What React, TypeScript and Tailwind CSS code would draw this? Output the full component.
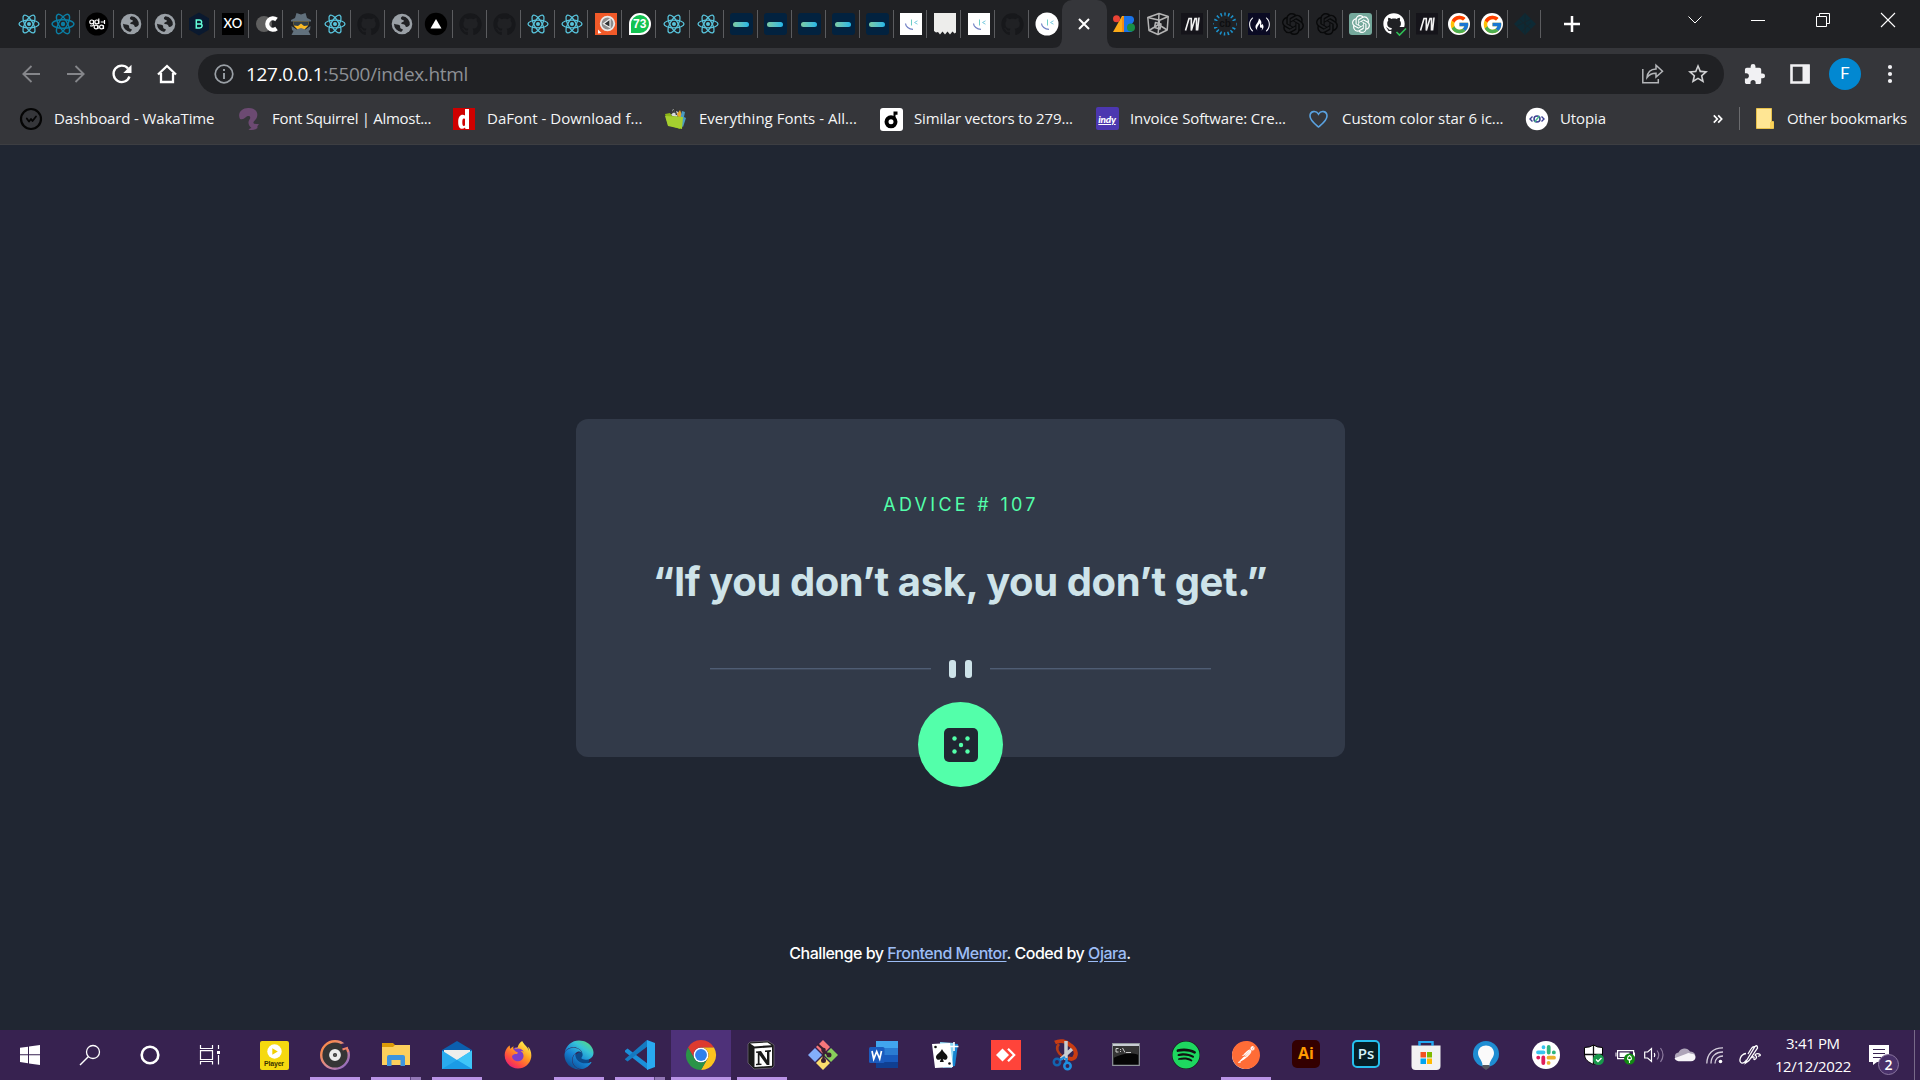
import React from "react";
import { FaGithub, FaSpotify, FaEdge, FaFirefoxBrowser, FaFreeCodeCamp } from "react-icons/fa";
import { SiOpenai, SiPostman } from "react-icons/si";
import { FcGoogle } from "react-icons/fc";
import { MdExtension, MdStarBorder } from "react-icons/md";

type SvgProps = { children: React.ReactNode; box?: string; className?: string };

const Svg = ({ children, box = "0 0 22 22", className = "size-[22px]" }: SvgProps) => (
  <svg viewBox={box} className={`${className} shrink-0 overflow-visible`} fill="none">
    {children}
  </svg>
);

/* ---------- tab favicons ---------- */

const Atom = ({ color, className }: { color: string; className: string }) => (
  <Svg className={className}>
    <g stroke={color} strokeWidth="1.300">
      <ellipse cx="11" cy="11" rx="10" ry="3.900" />
      <ellipse cx="11" cy="11" rx="10" ry="3.900" transform="rotate(60 11 11)" />
      <ellipse cx="11" cy="11" rx="10" ry="3.900" transform="rotate(120 11 11)" />
    </g>
    <circle cx="11" cy="11" r="2" fill={color} />
  </Svg>
);

const ReactTab = () => <Atom color="#58c4dc" className="size-[22px]" />;
const ReactDark = () => <Atom color="#0b7ea4" className="size-[24px]" />;
const GithubTab = () => <FaGithub className="size-[23px] text-[#17181b]" />;

const GlobeTab = () => (
  <Svg>
    <circle cx="11" cy="11" r="10.300" fill="#9aa0a6" />
    <path
      d="M11.500 3.200c-1.600 1-2 2.200-1.200 3 .9.9 2.400.3 2.600 1.600.2 1.500-2.400 1.200-2.600 2.500-.1 1.200 2.900.8 3.700 1.700.6.8.3 1.900 1.500 1.900 1.600 0 2.600-1 3.300-2.200A8 8 0 0 0 11.500 3.200Z"
      fill="#202124"
    />
    <path
      d="M3 10.800c1.800 1 4.300.4 5.600 1.500 1 .9.2 2.100.9 2.900.8.9 2.600.5 2.300 1.700-.2.900-1.400 1-1.500 2A8 8 0 0 1 3 10.800Z"
      fill="#202124"
    />
  </Svg>
);

const GdaTab = () => (
  <Svg>
    <circle cx="11" cy="11" r="11.500" fill="#000" />
    <g stroke="#fff" strokeWidth="1.200">
      <circle cx="5.700" cy="8.900" r="1.900" />
      <path d="M7.700 7v4.600c0 1.500-2.500 1.700-3.400.9" />
      <circle cx="10.800" cy="8.900" r="1.900" />
      <path d="M12.800 5.500v5.500M14.700 9h4M18.500 7v4" />
      <circle cx="10" cy="14" r="1.900" />
      <path d="M12 12.200v3.800M17.500 12.200v3.800" />
      <circle cx="15.500" cy="14" r="1.900" />
    </g>
  </Svg>
);

const BTab = () => (
  <Svg>
    <path d="M11-.5 21 5.200v11.600L11 22.500 1 16.800V5.200Z" fill="#0a192f" />
    <path d="M8.300 7v8h3.300c3.100 0 3.200-3.500 1-4 1.700-.7 1.400-4-1.200-4ZM8.500 10.900h3.500" stroke="#64ffda" strokeWidth="1.500" />
  </Svg>
);

const XOTab = () => (
  <div className="flex size-[22px] items-center justify-center bg-black font-['Lato'] text-[13px] font-semibold text-white">XO</div>
);

const CTab = () => (
  <Svg>
    <circle cx="8" cy="11" r="8" fill="#5f5f5f" />
    <path d="M20.500 6.500a5.700 5.700 0 1 0 0 9" stroke="#fff" strokeWidth="4.200" />
  </Svg>
);

const SpyTab = () => (
  <Svg>
    <path d="M5 5 6.500 0 11 1.500 15.500 0 17 5l4 2v1.500H1V7Z" fill="#61707c" />
    <path d="M3 8.500h16l-1 4.500-4 4H8l-4-4Z" fill="#f9b924" />
    <path d="M3 8.500h16l-1 4-4 .5-3-2.500-3 2.500-4-.5Z" fill="#33404a" />
    <path d="m1.500 13 5 3.500L11 15l4.500 1.500 5-3.500-.5 4-1.500 1 2 4h-19l2-4-1.500-1Z" fill="#61707c" />
  </Svg>
);

const VercelTab = () => (
  <Svg>
    <circle cx="11" cy="11" r="11.200" fill="#000" />
    <path d="M11 6 16.500 15.500h-11Z" fill="#fff" />
  </Svg>
);

const OrangeTab = () => (
  <Svg>
    <path d="M0 0h22v22H0Z" fill="#f15a29" />
    <circle cx="12.500" cy="10.500" r="6.800" fill="#8d8d8d" stroke="#e9e9e9" strokeWidth="1.800" />
    <path d="M8.500 10.700 15 6v8.500Z" fill="#2e3133" stroke="#eee" strokeWidth="1.200" />
    <path d="M3 20.500v-4L6.500 20Z" fill="#fff" />
  </Svg>
);

const WhatsappTab = () => (
  <div className="flex size-[22px] items-center justify-center rounded-full rounded-bl-[3px] border-2 border-white bg-[#12c351] font-['Liberation_Sans'] text-[12px] font-bold text-white">
    73
  </div>
);

const PillTab = () => (
  <div className="flex h-[22px] w-[23px] items-center justify-center rounded-[3px] bg-[#02223f]">
    <div className="h-[5px] w-4 rounded-full bg-linear-to-r from-[#7ccba2] to-[#1fb6e8]" />
  </div>
);

const Smile = () => (
  <>
    <path d="M11.500 6.500v6" stroke="#5cc8c0" strokeWidth=".9" />
    <path d="m17.500 7.800-3 1.700 3 1.700" stroke="#6fc7dd" strokeWidth=".9" />
    <path d="M5.500 10.500c.2 3 3.300 5.800 7.500 5.800" stroke="#6f7fc4" strokeWidth="1.200" />
  </>
);

const SmileSquareTab = () => (
  <Svg>
    <path d="M0 0h22v22H0Z" fill="#fff" />
    <Smile />
  </Svg>
);

const SmileRoundTab = () => (
  <Svg>
    <circle cx="11" cy="11" r="11.500" fill="#fff" />
    <Smile />
  </Svg>
);

const PaperTab = () => (
  <Svg>
    <path d="M0 0h22v19.500l-1.500 1-2-2-2.500 3-2.500-3-2.500 3-2.500-3-2.500 3-2-2.500-2 .5L0 18Z" fill="#ededeb" />
  </Svg>
);

const ABTab = () => (
  <Svg>
    <path d="M9 3h3v16H0Z" fill="#fbab18" />
    <path d="M11 3h6.500c4.500 0 4.500 6 1.500 7.500 3.500 2 2.500 8.500-2 8.500h-6Z" fill="#1a73e8" />
    <path d="M11 3v16H9V5Z" fill="#f28a16" />
    <circle cx="3.500" cy="5.700" r="3.500" fill="#ea4335" />
    <circle cx="18" cy="14.500" r="4" fill="#188f45" />
  </Svg>
);

const CubeTab = () => (
  <Svg>
    <g stroke="#b4b4b4" strokeWidth="1.500" strokeLinejoin="round">
      <path d="M.8 4.500 12 .5l9.200 3-1 13.500L11 21.500 2 17.500Z" />
      <path d="M.8 4.500 12.500 7.300l8.700-3.800M12.500 7.300 11 21.500M12 .5l-.5 11M2 17.500l9.500-6 8.700 5.500M8.500 9.500l-1 5 5.500 1.500 1-5Z" />
    </g>
  </Svg>
);

const MTab = () => (
  <Svg>
    <path d="M0 0h22v21.500H0Z" fill="#15141a" />
    <path d="M4.500 17.500 8 5.500l2.300 0V17.500L14 5.500h1.500V17.500M18 4.500l-1.500 13" stroke="#f2f2f2" strokeWidth="1.600" />
  </Svg>
);

const CbTab = () => (
  <Svg>
    <circle cx="11" cy="11" r="9.900" stroke="#1b93ce" strokeWidth="3.400" strokeDasharray="1.500 2.300" />
    <path d="M0 8h22v6H0Z" fill="#202124" />
    <text x="11" y="14" textAnchor="middle" fontSize="10" fontWeight="bold" fontFamily="Liberation Sans, sans-serif" fill="#0d0e10">
      cb
    </text>
  </Svg>
);

const FccTab = () => (
  <div className="flex size-[22px] items-center justify-center bg-[#0a0a23]">
    <FaFreeCodeCamp className="size-[21px] text-white" />
  </div>
);

const OpenaiTab = () => <SiOpenai className="size-[22px] text-[#08090a]" />;

const ChatgptTab = () => (
  <div className="flex h-[22px] w-[23px] items-center justify-center rounded-[3px] bg-[#75a99c]">
    <SiOpenai className="size-[18px] text-white" />
  </div>
);

const GithubCheckTab = () => (
  <div className="relative size-[22px]">
    <FaGithub className="size-[22px] text-white" />
    <svg viewBox="0 0 12 10" className="absolute -right-0.5 -bottom-0.5 h-[10px] w-3" fill="none">
      <path d="M0 0h12v10H0Z" fill="#202124" />
      <path d="m1.500 5 3 3L11 1.500" stroke="#2fbf55" strokeWidth="1.600" />
    </svg>
  </div>
);

const GoogleTab = () => (
  <div className="flex size-[22px] items-center justify-center rounded-full bg-white">
    <FcGoogle className="size-[21px]" />
  </div>
);

const DiamondTab = () => (
  <Svg>
    <path d="M11 0 22 11 11 22 0 11Z" fill="#0d2a35" />
    <path d="m5 6 12 10M3 13l14-7M11 1v20M8 18l9-8" stroke="#1b2429" strokeWidth=".8" />
  </Svg>
);

const leftTabs = [
  ReactTab, ReactDark, GdaTab, GlobeTab, GlobeTab, BTab, XOTab, CTab, SpyTab, ReactTab, GithubTab, GlobeTab,
  VercelTab, GithubTab, GithubTab, ReactTab, ReactTab, OrangeTab, WhatsappTab, ReactTab, ReactTab, PillTab,
  PillTab, PillTab, PillTab, PillTab, SmileSquareTab, PaperTab, SmileSquareTab, GithubTab, SmileRoundTab,
];
const rightTabs = [ABTab, CubeTab, MTab, CbTab, FccTab, OpenaiTab, OpenaiTab, ChatgptTab];
const endTabs = [GithubCheckTab, MTab, GoogleTab, GoogleTab, DiamondTab];

const Tabs = ({ items, width, openEnd = false }: { items: React.FC[]; width: string; openEnd?: boolean }) => (
  <>
    {items.map((Icon, i) => (
      <div
        key={i}
        className={`${width} flex h-7 shrink-0 items-center justify-center border-r pl-0.5 ${
          openEnd && i === items.length - 1 ? "border-transparent" : "border-[#5b5c5f]"
        }`}
      >
        <Icon />
      </div>
    ))}
  </>
);

const TabStrip = () => (
  <div className="flex h-12 items-center bg-[#202124] pl-3">
    <Tabs items={leftTabs} width="w-[33.920px]" openEnd />
    <div className="relative -ml-[1.500px] flex h-12 w-[45px] shrink-0 items-center justify-center self-start rounded-t-[10px] bg-[#35363a]">
      <Svg box="0 0 12 12" className="size-3">
        <path d="m1 1 10 10M11 1 1 11" stroke="#fff" strokeWidth="2" />
      </Svg>
      <svg viewBox="0 0 10 10" className="absolute bottom-0 -left-2.5 size-2.5">
        <path d="M10 0v10H0Q10 10 10 0Z" fill="#35363a" />
      </svg>
      <svg viewBox="0 0 10 10" className="absolute -right-2.5 bottom-0 size-2.5">
        <path d="M0 0v10h10Q0 10 0 0Z" fill="#35363a" />
      </svg>
    </div>
    <div className="flex items-center">
      <Tabs items={rightTabs} width="w-[33.800px]" />
      <Tabs items={endTabs} width="w-[32.800px]" />
    </div>
    <div className="ml-[22px]">
      <Svg box="0 0 18 18" className="size-[18px]">
        <path d="M9 1v16M1 9h16" stroke="#fff" strokeWidth="2.500" />
      </Svg>
    </div>
    <div className="mr-[25px] mb-2 ml-auto flex items-center">
      <Svg box="0 0 14 8" className="mr-[49px] h-2 w-3.5">
        <path d="m.5.5 6.500 6.500L13.500.5" stroke="#fff" strokeWidth="1" />
      </Svg>
      <div className="mr-[51px] h-px w-3.5 bg-white" />
      <Svg box="0 0 14 14" className="mr-[51px] size-3.5">
        <path d="M.5 3.500h10v10H.5ZM3.500 3.500v-3h10v10h-3" stroke="#fff" />
      </Svg>
      <Svg box="0 0 14 14" className="size-3.5">
        <path d="m0 0 14 14M14 0 0 14" stroke="#fff" strokeWidth="1.100" />
      </Svg>
    </div>
  </div>
);

const Toolbar = () => (
  <div className="flex h-[46px] items-end pl-[22px]">
    <div className="flex h-10 w-[176px] items-center">
      <Svg box="0 0 18 18" className="mr-[27px] size-[18px]">
        <path d="M18 9H1M9.500 1 1.300 9l8.200 8" stroke="#85868a" strokeWidth="1.800" />
      </Svg>
      <Svg box="0 0 18 18" className="mr-[27px] size-[18px]">
        <path d="M0 9h17M8.500 1l8.200 8-8.200 8" stroke="#85868a" strokeWidth="1.800" />
      </Svg>
      <Svg box="0 0 20 20" className="mr-[25px] size-5">
        <path d="M17.500 12.500A8.200 8.200 0 1 1 16 4.500" stroke="#fff" strokeWidth="2.300" />
        <path d="M19.500.8v8.200h-8.200Z" fill="#fff" />
      </Svg>
      <Svg box="0 0 20 20" className="size-5">
        <path d="M1 10.500 10 2l9 8.500M4 9v9h12V9" stroke="#fff" strokeWidth="2.300" />
      </Svg>
    </div>
    <div className="flex h-10 w-[1526px] items-center rounded-full bg-[#202124] pr-3.5 pl-4">
      <Svg box="0 0 20 20" className="size-5">
        <circle cx="10" cy="10" r="8.800" stroke="#9aa0a6" strokeWidth="1.700" />
        <path d="M10 9v6M10 5v2" stroke="#9aa0a6" strokeWidth="1.900" />
      </Svg>
      <div className="ml-3 font-['Open_Sans','Noto_Sans',sans-serif] text-[19px] leading-none tracking-[-0.320px] whitespace-nowrap text-[#8d9095]">
        <span className="text-white">127.0.0.1</span>:5500/index.html
      </div>
      <Svg box="0 0 22 20" className="mr-[22px] ml-auto h-5 w-[22px]">
        <path d="M.8 5v13.800h15.500V15" stroke="#b4b6b9" strokeWidth="1.500" />
        <path d="M5 13.500C5.500 8 9 5.200 14 5V1.300l6.500 5.900L14 13V9.300c-4-.1-6.500 1-9 4.200Z" stroke="#b4b6b9" strokeWidth="1.500" />
      </Svg>
      <MdStarBorder className="size-6 text-[#d0d1d3]" />
    </div>
    <div className="flex h-10 items-center">
      <MdExtension className="ml-[19px] size-[23px] text-[#f1f1f3]" />
      <Svg box="0 0 20 20" className="ml-6 size-5">
        <path d="M1.500 1.500h17v17h-17Z" stroke="#f1f1f3" strokeWidth="2.600" />
        <path d="M12.500 1h7v18h-7Z" fill="#f1f1f3" />
      </Svg>
      <div className="ml-[19px] flex size-8 items-center justify-center rounded-full bg-[#0288d1] pb-px font-['Roboto'] text-[17px] text-white">F</div>
      <Svg box="0 0 4 20" className="ml-[27px] h-5 w-1">
        <circle cx="2" cy="3" r="2.100" fill="#f1f1f3" />
        <circle cx="2" cy="10" r="2.100" fill="#f1f1f3" />
        <circle cx="2" cy="17" r="2.100" fill="#f1f1f3" />
      </Svg>
    </div>
  </div>
);

/* ---------- bookmarks ---------- */

const Waka = () => (
  <Svg>
    <circle cx="11" cy="11" r="10" stroke="#050505" strokeWidth="2.200" />
    <path d="m6.800 10.500 2.200 3 2-2.500 1.500 2 3.500-4.500" stroke="#050505" strokeWidth="1.800" strokeLinejoin="round" strokeLinecap="round" />
  </Svg>
);
const Squirrel = () => (
  <Svg>
    <path
      d="M2 11C-1 5 4-.5 11 0c6 .2 9.500 4 8 9-1 3.300-4 4-3.500 6 .4 1.300 3 1 5.500 1.300-1 1.500-2 1.500-1.500 3.700-2 2.200-7 2.500-9 1.500 1-1 2-1.200 3-1.500-3-2.500-4-6-2-8.500 1.500-2 .5-4-1.500-3.500C7 8.700 7 12 2 11Z"
      fill="#6c4a72"
    />
  </Svg>
);
const Dafont = () => (
  <Svg>
    <path d="M0 0h22v22H0Z" fill="#cf0000" />
    <path d="M12 1h4v20h-3.500l-.5-1.500C9 22.500 5 20.500 5.200 14 5.200 8 8.500 5.500 12 7.500Zm0 10c-2-1.300-2.700.5-2.700 3.300 0 3 .7 4.500 2.700 3.200Z" fill="#fff" />
  </Svg>
);
const Folder = () => (
  <Svg>
    <path d="m6 7 2-6 5 3-1 7Z" fill="#d8dcdc" />
    <path d="m6 6 4-5 1.500 6M8 4h3" stroke="#343434" strokeWidth="1.300" />
    <path d="m12 6 3-4 2 5-2 6Z" fill="#e4a328" />
    <path d="m17 3 3 1-1 5 2 1-3 9-4-3Z" fill="#4a9bc1" />
    <path d="m0 6 5-1 2 3 9 1-1 12L3 17Z" fill="#8bb517" />
    <path d="m0 8 18 1-1 12L3 18Z" fill="#a5cf2f" />
  </Svg>
);
const Similar = () => (
  <Svg>
    <rect width="23" height="23" rx="3" fill="#fff" />
    <circle cx="11" cy="13.800" r="4.500" stroke="#000" strokeWidth="4" />
    <path d="M13.500 3.500h4v3.200h-2V12h-2Z" fill="#000" />
  </Svg>
);
const Indy = () => (
  <div className="flex size-[23px] shrink-0 items-center justify-center rounded-[2px] bg-[#4c37b0] font-['Lato'] text-[10px] font-black tracking-tight text-white italic underline">
    indy
  </div>
);
const Heart = () => (
  <Svg>
    <path d="M10.500 19C7 16 2 12.500 2 8c0-5 6-6 8.500-1.800C13 2 19 3 19 8c0 4.500-5 8-8.500 11Z" stroke="#5aa2e0" strokeWidth="1.600" />
  </Svg>
);
const Utopia = () => (
  <Svg>
    <circle cx="11" cy="11" r="11.200" fill="#fff" />
    <circle cx="11" cy="11" r="3" stroke="#3b3f91" strokeWidth="1.500" />
    <path d="M6.500 8.500 4 11l2.500 2.500M15.500 8.500 18 11l-2.500 2.500" stroke="#3b3f91" strokeWidth="1.400" />
    <path d="m8.500 14 5-6" stroke="#43bb8a" strokeWidth="1.300" />
  </Svg>
);

const bookmarks: { icon: React.FC; label: string; slot: string }[] = [
  { icon: Waka, label: "Dashboard - WakaTime", slot: "w-[218px] tracking-[-0.120px]" },
  { icon: Squirrel, label: "Font Squirrel | Almost...", slot: "w-[215px] tracking-[-0.300px]" },
  { icon: Dafont, label: "DaFont - Download f...", slot: "w-[212px] tracking-[0.020px]" },
  { icon: Folder, label: "Everything Fonts - All...", slot: "w-[215px] tracking-[0.020px]" },
  { icon: Similar, label: "Similar vectors to 279...", slot: "w-[216px] tracking-[-0.140px]" },
  { icon: Indy, label: "Invoice Software: Cre...", slot: "w-[212px] tracking-[-0.130px]" },
  { icon: Heart, label: "Custom color star 6 ic...", slot: "w-[218px] tracking-[-0.070px]" },
  { icon: Utopia, label: "Utopia", slot: "w-[184px] tracking-[-0.100px]" },
];

const Bookmarks = () => (
  <div className="flex h-[51px] items-center border-b border-[#3d3e42] pb-px pl-5 font-['Open_Sans','Noto_Sans',sans-serif] text-[15px] leading-none tracking-[-0.220px] whitespace-nowrap text-[#f4f5f6]">
    {bookmarks.map(({ icon: Icon, label, slot }) => (
      <div key={label} className={`${slot} flex shrink-0 items-center`}>
        <div className="mr-3 flex size-[22px] shrink-0 items-center justify-center">
          <Icon />
        </div>
        <span className="pb-px">{label}</span>
      </div>
    ))}
    <Svg box="0 0 10 8" className="ml-[3px] h-2 w-2.5">
      <path d="m.8.3 3.500 3.700L.8 7.700M5.200.3 8.700 4 5.200 7.700" stroke="#fff" strokeWidth="1.700" />
    </Svg>
    <div className="ml-4 h-[23px] w-px bg-[#6a6b6e]" />
    <Svg box="0 0 18 21" className="mr-[13px] ml-4 h-[21px] w-[18px]">
      <path d="M.5.500h15v13h2v7H.5Z" fill="#ffe694" stroke="#e8c14b" />
      <path d="M14 20v-6h3.500v6Z" fill="#fbd35a" />
    </Svg>
    <span className="pb-px">Other bookmarks</span>
  </div>
);

/* ---------- page ---------- */

const Page = () => (
  <main className="flex h-[885px] flex-col items-center bg-[#202632] pt-[274px] font-['Inter',sans-serif]">
    <section className="flex h-[338px] w-[769px] flex-col items-center rounded-xl bg-[#323a49] pt-[76px]">
      <h1 className="pl-0.5 text-[18px] leading-[20px] font-normal tracking-[3.300px] whitespace-nowrap text-[#53ffaa]">ADVICE # 107</h1>
      <p className="mt-[42px] text-[40px] leading-[50px] font-bold tracking-[-0.420px] whitespace-nowrap text-[#cee3e9]">
        “If you don’t ask, you don’t get.”
      </p>
      <div className="mt-[53px] flex h-[18px] items-center">
        <div className="flex h-0.5 w-[221px] flex-col bg-[#3e485a]">
          <div className="h-px bg-[#4f5d74]" />
        </div>
        <div className="mx-[18px] flex gap-[9px]">
          <div className="h-[18px] w-[7px] rounded-[3px] bg-[#cee3e9]" />
          <div className="h-[18px] w-[7px] rounded-[3px] bg-[#cee3e9]" />
        </div>
        <div className="flex h-0.5 w-[221px] flex-col bg-[#3e485a]">
          <div className="h-px bg-[#4f5d74]" />
        </div>
      </div>
      <button className="mt-6 flex size-[85px] shrink-0 items-center justify-center rounded-full bg-[#53ffaa]">
        <Svg box="0 0 34 34" className="ml-px size-[34px]">
          <rect width="34" height="34" rx="5" fill="#202632" />
          <g fill="#53ffaa">
            <circle cx="10.500" cy="10.500" r="2.200" />
            <circle cx="23.500" cy="10.500" r="2.200" />
            <circle cx="17" cy="17" r="2.200" />
            <circle cx="10.500" cy="23.500" r="2.200" />
            <circle cx="23.500" cy="23.500" r="2.200" />
          </g>
        </Svg>
      </button>
    </section>
    <footer className="mt-[186px] text-[16px] leading-5 font-medium tracking-[-0.480px] whitespace-nowrap text-white">
      Challenge by <a className="text-[#9dbdf5] underline underline-offset-2">Frontend Mentor</a>. Coded by{" "}
      <a className="text-[#9dbdf5] underline underline-offset-2">Ojara</a>.
    </footer>
  </main>
);

/* ---------- taskbar ---------- */

const I30 = ({ children }: { children: React.ReactNode }) => (
  <Svg box="0 0 30 30" className="size-[30px]">
    {children}
  </Svg>
);

const WindowsIcon = () => (
  <Svg box="0 0 20 20" className="size-5">
    <path d="M0 2.800 8 1.700v7.600H0ZM9 1.500 20 0v9.300H9ZM0 10.300h8v7.900L0 17.100ZM9 10.300h11V20L9 18.500Z" fill="#fff" />
  </Svg>
);
const SearchIcon = () => (
  <Svg box="0 0 20 20" className="size-5">
    <circle cx="13" cy="7" r="6.500" stroke="#fff" strokeWidth="1.300" />
    <path d="M8.500 11.500 0 20" stroke="#fff" strokeWidth="1.500" />
  </Svg>
);
const CortanaIcon = () => (
  <Svg box="0 0 20 20" className="size-5">
    <circle cx="10" cy="10" r="8.300" stroke="#fff" strokeWidth="2.600" />
  </Svg>
);
const TaskViewIcon = () => (
  <Svg box="0 0 20 20" className="size-5">
    <path d="M.5 0v3.500h12V0M.5 5.700h12v8.800H.5ZM.5 19.500V16.500h12v3M18.500 0v4M18.500 10v9.500" stroke="#fff" strokeWidth="1.200" />
    <path d="M17 6h3v3h-3Z" fill="#fff" />
  </Svg>
);

const PlayerIcon = () => (
  <div className="flex size-[29px] flex-col items-center rounded-[2px] bg-[#f5d90f] pt-[3px]">
    <Svg box="0 0 15 15" className="size-[15px]">
      <circle cx="7.500" cy="7.500" r="7.200" fill="#fff" />
      <path d="m5.300 4.300 5.500 3.200-5.500 3.200Z" fill="#f0cf00" />
    </Svg>
    <span className="font-['Liberation_Sans'] text-[7px] leading-[9px] font-bold tracking-[-0.200px] text-[#3c3300]">Player</span>
  </div>
);
const GrooveIcon = () => (
  <I30>
    <defs>
      <linearGradient id="groove" x1="0" y1="0" x2="1" y2="1">
        <stop offset=".2" stopColor="#f78a52" />
        <stop offset=".55" stopColor="#d88a94" />
        <stop offset="1" stopColor="#7d62c9" />
      </linearGradient>
    </defs>
    <circle cx="15" cy="15" r="13.800" fill="#353535" stroke="url(#groove)" strokeWidth="2.400" />
    <path d="m21 4 4-1 5 6-7 1" fill="#372250" />
    <path d="m22.500 9.500 4.500-1.500 1 4" stroke="#f28369" strokeWidth="2" />
    <circle cx="15" cy="15" r="4" stroke="#ececec" strokeWidth="3.800" />
    <circle cx="15" cy="15" r="1.500" fill="#555" />
  </I30>
);
const ExplorerIcon = () => (
  <I30>
    <path d="M1 3h11l2 2v6H1Z" fill="#dc9a07" />
    <path d="M1 7h11l2-2h15v20H1Z" fill="#fccf5c" />
    <path d="M6 26V17q0-2 2-2h14q2 0 2 2v9h-4.500v-6h-9v6Z" fill="#3d94de" />
  </I30>
);
const MailIcon = () => (
  <I30>
    <path d="M0 10 15 1l15 9v10H0Z" fill="#0b5fae" />
    <path d="M2 10h26v10H2Z" fill="#eeeeec" />
    <path d="M0 10.500 15 20l15-9.500V29H0Z" fill="#29aaee" />
    <path d="m15 20 15-9.500V29Z" fill="#3fc6f8" />
    <path d="M0 29 15 20l15 9Z" fill="#1a9be6" />
  </I30>
);
const FirefoxIcon = () => (
  <div className="relative size-7">
    <div className="absolute inset-1.5 rounded-full bg-[#7b3fc9]" />
    <svg className="absolute size-0">
      <linearGradient id="fox" x1=".9" y1="0" x2=".2" y2="1">
        <stop offset=".1" stopColor="#fff04a" />
        <stop offset=".45" stopColor="#ff9a22" />
        <stop offset=".75" stopColor="#ff4b41" />
        <stop offset="1" stopColor="#e6187d" />
      </linearGradient>
    </svg>
    <FaFirefoxBrowser className="relative size-7" fill="url(#fox)" />
  </div>
);
const EdgeIcon = () => (
  <div className="relative size-[30px]">
    <svg className="absolute size-0">
      <linearGradient id="edge" x1="1" y1="0" x2=".3" y2="1">
        <stop offset="0" stopColor="#5fe065" />
        <stop offset=".35" stopColor="#36c2d7" />
        <stop offset=".65" stopColor="#1784d6" />
        <stop offset="1" stopColor="#0c4f94" />
      </linearGradient>
    </svg>
    <div className="absolute top-3 left-2.5 h-4 w-[15px] rounded-full bg-[#0c4a8a]" />
    <FaEdge className="relative size-[30px]" fill="url(#edge)" />
  </div>
);
const CodeIcon = () => (
  <I30>
    <path d="M0 10.500 2.500 8.500 23 24v6L0 12Z" fill="#1b8fd8" />
    <path d="M0 19 22 0l1 6L2.500 21.500 0 19.500Z" fill="#1579c0" />
    <path d="M22 0 30 3v24l-8 3Z" fill="#29a9f1" />
  </I30>
);
const ChromeIcon = () => (
  <Svg box="0 0 48 48" className="size-[30px]">
    <circle cx="24" cy="24" r="12" fill="#fff" />
    <path d="M24 12H44.780a23.994 23.994 0 0 0-41.564.003L13.608 30l.009-.002A11.985 11.985 0 0 1 24 12Z" fill="#dd3b2f" />
    <path d="M34.391 30.003 24 48A23.994 23.994 0 0 0 44.780 12.003H24l-.003.009A11.985 11.985 0 0 1 34.391 30.003Z" fill="#fcc31e" />
    <path d="M13.609 30.003 3.218 12.006A23.994 23.994 0 0 0 24.003 48L34.393 30.003l-.007-.007a11.985 11.985 0 0 1-20.778.007Z" fill="#2a9447" />
    <circle cx="24" cy="24" r="9.500" fill="#2f80ec" />
  </Svg>
);
const NotionIcon = () => (
  <Svg box="2 0 30 30" className="size-[30px]">
    <path d="M3 4 5 2l18-1 6 4v21l-2 2-18 1-6-6Z" fill="#191919" stroke="#77717d" strokeWidth=".7" />
    <path d="m5 3.500 17.500-1 4 2.700-17 1.200Z" fill="#fff" />
    <path d="m9.500 8.500 17.500-1.200v18.500L9.500 27Z" fill="#fff" />
    <path d="m11 11.500 5-.4 6 9v-8l-2-.2v-1.400l6-.4v1.500l-1.600.3v13l-2.600.1-7.300-10v8.500l2 .3v1.200l-5.500.3v-1.300l1.800-.5V13l-1.800-.2Z" fill="#191919" />
  </Svg>
);
const GitIcon = () => (
  <I30>
    <path d="m15 0 7 7-7 7-7-7Z" fill="#f7767b" />
    <path d="m7 8 7 7-7 7-7-7Z" fill="#83aefb" />
    <path d="m23 8 7 7-7 7-7-7Z" fill="#88ce5b" />
    <path d="m15 16 7 7-7 7-7-7Z" fill="#fbdc6d" />
    <path d="m9.500 4 6 5.500v12M15.500 11l6 4.500" stroke="#3a2032" strokeWidth="2.200" />
    <circle cx="15.500" cy="20.500" r="2.500" fill="#3a2032" />
    <circle cx="15.500" cy="10" r="2.300" fill="#3a2032" />
    <circle cx="21" cy="15" r="2.500" fill="#3a2032" />
  </I30>
);
const WordIcon = () => (
  <I30>
    <path d="M7 1h22v7H7Z" fill="#41a5ee" />
    <path d="M7 8h22v7H7Z" fill="#2b7cd3" />
    <path d="M7 15h22v7H7Z" fill="#185abd" />
    <path d="M7 22h22v6H7Z" fill="#103f91" />
    <rect y="7" width="15.500" height="16" rx="1.500" fill="#1b5bbe" />
    <path d="m3 11 1.700 8L7.700 11.500l3 7.500L12.500 11" stroke="#fff" strokeWidth="1.700" />
  </I30>
);
const SolitaireIcon = () => (
  <I30>
    <path d="m12 3 16 1-3 22-12 2Z" fill="#1685d1" />
    <path d="m10 2 14 1-2 25-11-1Z" fill="#8bd8f5" />
    <path d="m2 4 18-1 3 24-18 1Z" fill="#fff" />
    <path d="M12 9c1.500 4 5.500 5 5.500 8.200 0 2.800-3.500 3.300-4.700 1.500l1 3.300h-4l1.200-3.300c-1.200 1.800-5 1.300-5-1.500C6 14 10.500 13 12 9Z" fill="#111" />
    <circle cx="5.500" cy="7" r="1.300" fill="#111" />
    <circle cx="19.500" cy="23.500" r="1.300" fill="#111" />
    <path d="M24 2v9M19.500 6.500h9" stroke="#fff" strokeWidth="1.600" />
  </I30>
);
const AnydeskIcon = () => (
  <I30>
    <path d="M0 0h30v30H0Z" fill="#ff443a" />
    <path d="m11.500 8.500 6.500 6.500-6.500 6.500L5 15Z" fill="#fff" />
    <path d="m17 8.700 6.200 6.300-6.200 6.300" stroke="#fff" strokeWidth="2.200" />
  </I30>
);
const SnipIcon = () => (
  <I30>
    <path d="M4 2.500C9 0 15 1 19 5c5 3 8 9 4 13-2 1.500-4 1-6 0" stroke="#c93c12" strokeWidth="4" />
    <path d="M8 4c-4 4-1 9 3 12" stroke="#b53b16" strokeWidth="2.500" />
    <path d="M15 1v19M21 9 10 19" stroke="#c9cdd0" strokeWidth="3.500" />
    <circle cx="6" cy="22" r="3.200" stroke="#1264b0" strokeWidth="2.500" />
    <circle cx="16.500" cy="26" r="3.200" stroke="#1e8fe0" strokeWidth="2.500" />
    <path d="m9 20 5-3M15.500 22v-4" stroke="#1e8fe0" strokeWidth="2.500" />
  </I30>
);
const CmdIcon = () => (
  <Svg box="0 0 28 24" className="h-6 w-7">
    <path d="M.7.700h26.600v21.600H.7Z" fill="#050505" stroke="#90959b" strokeWidth="1.200" />
    <path d="M1.300 3h25.400v9c-8-3-18-1-25.400 3Z" fill="#353535" />
    <path d="M1 1h26v2H1Z" fill="#c8cdd3" />
    <path d="M6.500 5.500H4v3.500h2.500M8.500 6v1M8.500 8v1M10.500 5l2.500 4.500M14 9.500h5" stroke="#ddd" strokeWidth=".9" />
  </Svg>
);
const SpotifyIcon = () => (
  <div className="flex size-7 items-center justify-center rounded-full bg-[#111]">
    <FaSpotify className="size-7 text-[#1ed760]" />
  </div>
);
const PostmanIcon = () => (
  <div className="flex size-[27px] items-center justify-center rounded-full bg-white">
    <SiPostman className="size-7 shrink-0 text-[#ff6c37]" />
  </div>
);
const AiIcon = () => (
  <div className="mb-0.5 flex size-7 items-center justify-center rounded-[5px] bg-[#330000] pb-0.5 font-['Open_Sans'] text-[16px] font-bold text-[#ff9a00]">
    Ai
  </div>
);
const PsIcon = () => (
  <div className="mb-0.5 flex size-7 items-center justify-center rounded-[5px] border-2 border-[#26c0ef] bg-[#061e26] pb-0.5 font-['Open_Sans'] text-[15px] font-semibold text-[#d5f2fb]">
    Ps
  </div>
);
const StoreIcon = () => (
  <I30>
    <path d="M8.500 7V2h13v5" stroke="#23a8f2" strokeWidth="2" />
    <path d="M.5 5.500h29V26q0 4-4 4h-21q-4 0-4-4Z" fill="#f2f2f2" />
    <path d="M8.500 5.500V2h13v3.500" stroke="#23a8f2" strokeWidth="2" />
    <path d="M9.500 12H15v5.500H9.500Z" fill="#f25022" />
    <path d="M16 12h5v5.500h-5Z" fill="#7fba00" />
    <path d="M9.500 18.500H15V24H9.500Z" fill="#00a4ef" />
    <path d="M16 18.500h5V24h-5Z" fill="#ffb900" />
  </I30>
);
const BulbIcon = () => (
  <I30>
    <circle cx="15" cy="14" r="13" fill="#1f8dd2" />
    <path d="M7 13c0-4.500 3.500-7.500 8-7.500s8 3 8 7.500c0 5-4.500 7-4.500 12.500h-7C11.500 20 7 18 7 13Z" fill="#fafafa" />
    <path d="M11.500 25h7v2.500l-3.500 2.500-3.500-2.500Z" fill="#555960" />
  </I30>
);
const SlackIcon = () => (
  <div className="flex size-7 items-center justify-center rounded-full bg-white">
    <Svg box="0 0 20 20" className="size-5">
      <g strokeWidth="3.800" strokeLinecap="round">
        <path d="M2 7.300h5.500M7.500 2.200v.1" stroke="#36c5f0" />
        <path d="M12.700 2v5.500M17.800 7.400h.1" stroke="#2eb67d" />
        <path d="M18 12.700h-5.500M12.600 17.800v.1" stroke="#ecb22e" />
        <path d="M7.300 18v-5.500M2.200 12.600h.1" stroke="#e01e5a" />
      </g>
    </Svg>
  </div>
);

type App = { icon: React.FC; open?: boolean; stacked?: boolean; active?: boolean };

const pinned: App[] = [
  { icon: PlayerIcon },
  { icon: GrooveIcon, open: true },
  { icon: ExplorerIcon, open: true, stacked: true },
  { icon: MailIcon, open: true },
  { icon: FirefoxIcon },
  { icon: EdgeIcon, open: true },
  { icon: CodeIcon, open: true, stacked: true },
  { icon: ChromeIcon, open: true, active: true },
  { icon: NotionIcon, open: true },
  { icon: GitIcon },
  { icon: WordIcon },
  { icon: SolitaireIcon },
];
const pinnedEnd: App[] = [
  { icon: AnydeskIcon },
  { icon: SnipIcon },
  { icon: CmdIcon },
  { icon: SpotifyIcon },
  { icon: PostmanIcon, open: true },
  { icon: AiIcon },
  { icon: PsIcon },
  { icon: StoreIcon },
  { icon: BulbIcon },
  { icon: SlackIcon },
];

const AppButton = ({ app, width }: { app: App; width: string }) => (
  <div className={`${width} flex h-[50px] shrink-0 flex-col items-center`}>
    <div className={`flex h-[47px] w-[60px] items-center justify-center pt-[3px] ${app.active ? "bg-[#4e3179]" : ""}`}>
      <app.icon />
    </div>
    {app.open && (
      <div className={`flex h-[3px] ${app.active ? "w-[60px]" : "w-[50px]"} bg-[#b993e6]`}>
        {app.stacked && <div className="ml-auto w-[11px] border-l border-[#5c4580] bg-[#9277b6]" />}
      </div>
    )}
  </div>
);

const Taskbar = () => (
  <div className="flex h-[50px] items-start bg-[#372250]">
    {[WindowsIcon, SearchIcon, CortanaIcon, TaskViewIcon].map((Icon, i) => (
      <div key={i} className="flex h-[50px] w-[60px] shrink-0 items-center justify-center">
        <Icon />
      </div>
    ))}
    <div className="ml-[3.500px] flex">
      {pinned.map((app, i) => (
        <AppButton key={i} app={app} width="w-[61px]" />
      ))}
      {pinnedEnd.map((app, i) => (
        <AppButton key={i} app={app} width="w-[60.100px]" />
      ))}
    </div>
    <div className="ml-[7.500px] flex h-[50px] shrink-0 items-center">
      <Svg box="0 0 20 20" className="size-5">
        <path d="M.5 2.500Q6 2.500 9.500 0q3.500 2.500 9 2.500V9c0 6-4 8-9 10.500C4.500 17 .5 15 .5 9Z" fill="#fff" stroke="#000" />
        <path d="M9.500 0v19M.5 9.500h18" stroke="#111" strokeWidth="1.300" />
        <circle cx="14.500" cy="14.500" r="5.500" fill="#17984a" />
        <path d="m12 14.500 2 2 3.500-3.500" stroke="#fff" strokeWidth="1.300" />
      </Svg>
      <Svg box="0 0 20 20" className="ml-3 size-5">
        <path d="M1.600 5.600h16v8h-16Z" stroke="#fff" strokeWidth="1.200" />
        <path d="M3.500 7.500h10v4.500h-10Z" fill="#fff" />
        <path d="M18.500 7.500v4M0 7.500v4" stroke="#fff" />
        <circle cx="13.500" cy="14" r="5.500" fill="#128a12" />
        <path d="M13.500 18v-4M11.500 14c0-2 1-3 2-3.500 1 .5 2 1.500 2 3.500l-2 1.500Z" stroke="#fff" strokeWidth="1.100" />
      </Svg>
      <Svg box="0 0 22 20" className="ml-2 h-5 w-[22px]">
        <path d="M.7 7h3L7.500 3.500v13L3.700 13h-3Z" stroke="#fff" strokeWidth="1.200" />
        <path d="M10.300 8q1 2 0 4" stroke="#fff" strokeWidth="1.200" />
        <path d="M13 5.500q3.500 4.500 0 9M16.500 3q5 7 0 14" stroke="#8d7b9f" strokeWidth="1.200" />
      </Svg>
      <Svg box="0 0 22 14" className="ml-2 h-3.5 w-[22px]">
        <path d="M4.500 13A4.300 4.300 0 0 1 4.500 4.500 6.500 6.500 0 0 1 16 3.500c5 0 6 4 5 6.500Z" fill="#aea5b9" />
        <path d="M4.500 13.300q-3-.3-4-3L12.500 5.800q2-1.500 4.500 0c6-.5 6 7.500 0 7.500Z" fill="#f6f4f8" />
      </Svg>
      <Svg box="0 0 18 18" className="ml-2.5 size-[18px]">
        <path d="M.8 17.500C1 8 7 1.700 17 1.800M5 17.500C5 10.500 9.500 6 17 6M9 17.500c0-4.500 3.500-7.500 8-7.500" stroke="#d5cedc" strokeWidth="1.300" />
        <circle cx="14.500" cy="15.500" r="1.800" fill="#fff" />
      </Svg>
      <Svg box="0 0 22 22" className="ml-[15px] size-[22px]">
        <path
          d="M7 17.500 16 2.500q2.500-2 2.500 1.500L10 16.500l-3.500 2.500ZM16 2.500c-2 0-3 .5-4 2.500L9 10M7 9.500c-6 1-7.500 8-4.500 9.500 2.500 1 4-2 5-3M12.500 14c1.500-2 3-1 2.500.5s1 1.500 2 0 .5-2.500-1-3.500c1-2 4-1.500 5-.5s-1 2-2 1.500"
          stroke="#fff"
          strokeWidth="1.300"
        />
      </Svg>
    </div>
    <div className="ml-3 flex h-[50px] w-20 shrink-0 flex-col items-center pt-0.5 font-['Open_Sans','Noto_Sans',sans-serif] text-[15px] leading-[23px] tracking-[-0.350px] whitespace-nowrap text-white">
      <span>3:41 PM</span>
      <span>12/12/2022</span>
    </div>
    <div className="relative mt-[15px] ml-auto h-8 w-[31px] shrink-0">
      <Svg box="0 0 20 20" className="size-5">
        <path d="M0 0h20v17H8l-4 3v-3H0Z" fill="#fff" />
        <path d="M4 4.500h12M4 8.500h12M4 12.500h8" stroke="#372250" strokeWidth="1.200" />
      </Svg>
      <div className="absolute top-[9px] left-[9px] flex size-[21px] items-center justify-center rounded-full border border-[#8a769f] bg-[#49316a] font-['Open_Sans'] text-[14px] font-semibold text-white">
        2
      </div>
    </div>
    <div className="mr-[5px] ml-[14px] h-[50px] w-px shrink-0 bg-[#786a89]" />
  </div>
);

export default function App() {
  return (
    <div className="flex h-[1080px] w-[1920px] flex-col overflow-hidden bg-[#202632]">
      <header className="h-[145px] bg-[#35363a]">
        <TabStrip />
        <Toolbar />
        <Bookmarks />
      </header>
      <Page />
      <Taskbar />
    </div>
  );
}
